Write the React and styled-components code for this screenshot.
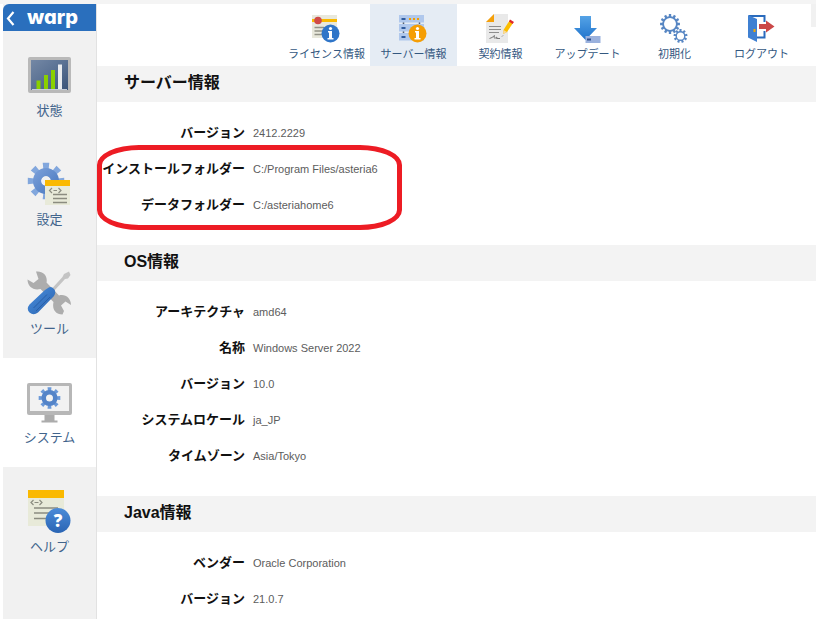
import styled, { createGlobalStyle } from "styled-components";

const GlobalStyle = createGlobalStyle`
  *,
  *::after {
    box-sizing: border-box;
  }
  body {
    margin: 0;
    background: #fff;
    font-family: "Liberation Sans", "Noto Sans CJK JP", sans-serif;
  }
`;

const Page = styled.div`
  display: flex;
  min-height: 100vh;
  padding-left: 3px;
  border-top: 4px solid #f4f4f4;
`;
const Sidebar = styled.nav`
  flex: none;
  display: flex;
  flex-direction: column;
  width: 94px;
  background: #f1f1f1;
  border-right: 1px solid #e2e2e2;
`;
const Brand = styled.a`
  display: flex;
  align-items: center;
  gap: 12px;
  height: 27px;
  padding-left: 3px;
  border-radius: 6px 0 0 0;
  background: #2a6fbd;
  color: #fff;
  font-family: Inter, sans-serif;
  font-size: 20px;
  font-weight: 800;
  font-feature-settings: "cv11";
  line-height: 24px;
  text-decoration: none;

  span {
    padding-bottom: 2px;
  }
`;
const SideLink = styled.a`
  display: flex;
  flex-direction: column;
  align-items: center;
  gap: 4px;
  height: 109px;
  padding-top: 22px;
  background: ${(props) => (props.$active ? "#fff" : "transparent")};
  color: #41648c;
  font-size: 13px;
  line-height: 20px;
  text-decoration: none;
`;
const Main = styled.main`
  flex: 1;
  min-width: 0;
`;
const Toolbar = styled.header`
  display: flex;
  justify-content: flex-end;
  height: 62px;
`;
const ToolLink = styled.a`
  display: flex;
  flex-direction: column;
  align-items: center;
  gap: 2px;
  width: 87px;
  padding-top: 10px;
  background: ${(props) => (props.$active ? "#e5ecf4" : "transparent")};
  color: #34587f;
  font-size: 11px;
  line-height: 16px;
  white-space: nowrap;
  text-decoration: none;
`;
const EdgeHandle = styled.div`
  width: 5px;
  height: 23px;
  margin-left: 6px;
  background: #f1f1f1;
`;
const SectionTitle = styled.h2`
  margin: 0;
  padding: 0 27px 2px;
  background: #f3f3f3;
  color: #111;
  font-size: 16px;
  line-height: 34px;
`;
const Details = styled.dl`
  margin: 0;
  padding: 13px 0 22px;

  section:last-child > & {
    padding-bottom: 0;
  }
`;
const Row = styled.div`
  display: grid;
  grid-template-columns: 148px 1fr;
  column-gap: 8px;
  line-height: 36px;
`;
const Label = styled.dt`
  color: #111;
  font-size: 13px;
  font-weight: 700;
  text-align: right;
  white-space: nowrap;
`;
const Value = styled.dd`
  margin: 0;
  color: #5c5c5c;
  font-size: 11px;
`;
const Group = styled.div`
  position: relative;

  &::after {
    content: "";
    position: absolute;
    top: -6px;
    left: 0;
    width: 305px;
    height: 85px;
    border: 5px solid #ed1c24;
    border-radius: 42px / 20px;
    pointer-events: none;
  }
`;

function gearPath(cx, cy, outer, inner, teeth) {
  const step = (Math.PI * 2) / teeth;
  const points = [];
  for (let i = 0; i < teeth; i++) {
    const a = i * step - Math.PI / 2;
    [
      [inner, -0.28],
      [outer, -0.23],
      [outer, 0.23],
      [inner, 0.28],
    ].forEach(([r, t]) => {
      const x = cx + r * Math.cos(a + t * step);
      const y = cy + r * Math.sin(a + t * step);
      points.push(`${x.toFixed(2)} ${y.toFixed(2)}`);
    });
  }
  return `M${points.join("L")}Z`;
}

function holePath(cx, cy, r) {
  return `M${cx - r} ${cy}a${r} ${r} 0 1 0 ${r * 2} 0a${r} ${r} 0 1 0 ${-r * 2} 0Z`;
}

function SideIcon({ children }) {
  return (
    <svg width="45" height="44" viewBox="0 0 45 44" aria-hidden="true">
      {children}
    </svg>
  );
}

function ToolIcon({ children }) {
  return (
    <svg width="29" height="30" viewBox="0 0 29 30" aria-hidden="true">
      {children}
    </svg>
  );
}

function StatusIcon() {
  return (
    <SideIcon>
      <defs>
        <linearGradient id="screen" x1="0" y1="0" x2="1" y2="1">
          <stop offset="0" stopColor="#7488a5" />
          <stop offset="0.5" stopColor="#5a7193" />
          <stop offset="1" stopColor="#3a5378" />
        </linearGradient>
      </defs>
      <rect x="1" y="4" width="43" height="36" rx="2" fill="#b9b9b9" />
      <rect x="4" y="7" width="37" height="30" fill="url(#screen)" />
      <path d="M5 36.500H40" stroke="#c6ccd6" />
      <path
        d="M11.500 36V27.500M19 36V22M26 36V17"
        stroke="#8ad000"
        strokeWidth="4"
      />
      <path d="M33 36V11.500" stroke="#e9ebee" strokeWidth="4" />
    </SideIcon>
  );
}

function SettingsIcon() {
  return (
    <SideIcon>
      <defs>
        <linearGradient id="cog" x1="0" y1="0" x2="1" y2="1">
          <stop offset="0" stopColor="#7ea2db" />
          <stop offset="1" stopColor="#4576bd" />
        </linearGradient>
      </defs>
      <path
        fillRule="evenodd"
        d={gearPath(19, 19, 18.5, 12, 8) + holePath(19, 19, 5)}
        fill="#82a7dd"
      />
      <path
        fillRule="evenodd"
        d={holePath(19, 19, 13) + holePath(19, 19, 5)}
        fill="url(#cog)"
      />
      <rect x="18" y="19" width="25" height="24" fill="#e8ead9" />
      <rect x="18" y="18" width="25" height="6" fill="#fab900" />
      <path
        d="M25 26l-2.500 2.500L25 31M31.500 26l2.500 2.500L31.500 31M26.500 28.500h3.500"
        fill="none"
        stroke="#8b8c80"
        strokeWidth="1.200"
      />
      <path
        d="M26 32.500H40M26 36.500H40M26 40.500H40"
        stroke="#8b8c80"
        strokeWidth="1.500"
      />
    </SideIcon>
  );
}

function ToolsIcon() {
  return (
    <SideIcon>
      <defs>
        <linearGradient id="handle" x1="0" y1="0" x2="1" y2="1">
          <stop offset="0" stopColor="#4a90e0" />
          <stop offset="1" stopColor="#2a62ad" />
        </linearGradient>
      </defs>
      <path
        d="M9 0.500C16 -0.500 21 5 19.500 11.500L32 24.500C38 22.500 44 27 44 34L38.500 30.500L34 34.500L37 40L35.500 43.500C28 43.500 25 38 26.500 31L13.500 18C6.500 20 0.500 15.500 0.500 8.500L6.500 12L11.500 8Z"
        fill="#adadad"
      />
      <path
        d="M42 0.500L43.500 4L41 7.500L38 8L27 20L25 17.500L35.500 6L37 3Z"
        fill="#c4c4c4"
      />
      <path
        d="M21 17Q24 14.500 27 18Q29.500 21 27 25L11 41.500Q6.500 45 2.500 41.500Q-1 38 2.500 33.500L18 19Z"
        fill="url(#handle)"
      />
      <path d="M6.500 37L20 23.500M9 40L23 26" stroke="#285fa8" />
    </SideIcon>
  );
}

function SystemIcon() {
  return (
    <SideIcon>
      <rect x="0" y="3" width="45" height="32" rx="2" fill="#b7b7b7" />
      <rect x="3" y="6" width="39" height="25" fill="#f2f2f2" />
      <path d="M17.500 35h10v5.500h3v2h-16v-2h3Z" fill="#acacac" />
      <path
        fillRule="evenodd"
        d={gearPath(22.5, 18, 11, 7.5, 8) + holePath(22.5, 18, 4)}
        fill="#6b99d8"
      />
      <path
        fillRule="evenodd"
        d={holePath(22.5, 18, 8) + holePath(22.5, 18, 3.5)}
        fill="#5484c8"
      />
    </SideIcon>
  );
}

function HelpIcon() {
  return (
    <SideIcon>
      <defs>
        <linearGradient id="ball" x1="0" y1="0" x2="0" y2="1">
          <stop offset="0" stopColor="#4b8bd8" />
          <stop offset="1" stopColor="#2a65b4" />
        </linearGradient>
      </defs>
      <rect x="1" y="1" width="36" height="36" fill="#e8ead9" />
      <rect x="1" y="1" width="36" height="8" fill="#fab900" />
      <path
        d="M6.500 11L4 13.500L6.500 16M12.500 11L15 13.500L12.500 16M7.500 13.500h4"
        fill="none"
        stroke="#8b8c80"
        strokeWidth="1.200"
      />
      <path
        d="M7 19H31M7 24H31M7 29.500H31"
        stroke="#8b8c80"
        strokeWidth="1.500"
      />
      <circle cx="31" cy="31.500" r="12.500" fill="url(#ball)" />
      <text
        x="31"
        y="37.500"
        textAnchor="middle"
        fill="#fff"
        fontSize="17"
        fontWeight="800"
        fontFamily="Open Sans"
      >
        ?
      </text>
    </SideIcon>
  );
}

function InfoBadge({ color }) {
  return (
    <g>
      <circle cx="18.500" cy="19.500" r="9" fill={color} />
      <path
        d="M16 17h4v7h1.500v1.500h-6V24H17v-5.500h-1Z"
        fill="#fff"
      />
      <circle cx="18.500" cy="14.500" r="1.600" fill="#fff" />
    </g>
  );
}

function LicenseIcon() {
  return (
    <ToolIcon>
      <rect x="0" y="1" width="25" height="23" fill="#e8e8dc" />
      <rect x="0" y="5" width="25" height="3" fill="#fab900" />
      <path
        d="M2.500 13.500H12M2.500 17H12M2.500 20.500H12"
        stroke="#929287"
        strokeWidth="1.300"
      />
      <circle cx="6" cy="6.500" r="3.800" fill="#d04b49" />
      <InfoBadge color="#2f75c8" />
    </ToolIcon>
  );
}

function ServerIcon() {
  return (
    <ToolIcon>
      <path d="M4.500 7V25M20.500 7V25" stroke="#555f70" strokeWidth="1.500" />
      {[1, 10, 19].map((y) => (
        <g key={y}>
          <rect x="0" y={y} width="25" height="7.500" fill="#b0c8ec" />
          <rect x="2.500" y={y + 3} width="4" height="2" fill="#315c9d" />
        </g>
      ))}
      <path
        d="M10 5H12M14 5H16M18 5H20"
        stroke="#f5a000"
        strokeWidth="2"
      />
      <InfoBadge color="#f59e05" />
    </ToolIcon>
  );
}

function ContractIcon() {
  return (
    <ToolIcon>
      <path d="M8 0H22V29H0V8Z" fill="#e9e9e9" />
      <path d="M8 0V8H0Z" fill="#f5a00a" />
      <path
        d="M3 12.500H15M3 15.500H15M3 18.500H13"
        stroke="#8d8d8d"
        strokeWidth="1.200"
      />
      <path
        d="M3.500 24.500Q6 24 8.500 21.500Q7 26 11 23L10.500 24.500H14M16 22.500l1-1"
        fill="none"
        stroke="#777"
      />
      <path d="M17 20L17.500 16L23.500 6.500L27 9L21 18Z" fill="#fcbd00" />
      <path d="M23 7.500L24 5.500L28 8L26.500 10Z" fill="#e0262c" />
      <path d="M17.500 16L21 18L17 20Z" fill="#f6d9a0" />
    </ToolIcon>
  );
}

function UpdateIcon() {
  return (
    <ToolIcon>
      <defs>
        <linearGradient id="arrow" x1="0" y1="0" x2="0" y2="1">
          <stop offset="0" stopColor="#55a3e6" />
          <stop offset="1" stopColor="#1f73cc" />
        </linearGradient>
      </defs>
      <path d="M7 2H18V14H24L12.500 26L1 14H7Z" fill="url(#arrow)" />
      <rect x="12.500" y="22" width="15" height="7" fill="#9ab1dd" />
      <rect x="14" y="24.500" width="4" height="2" fill="#2d4f8e" />
    </ToolIcon>
  );
}

function ResetIcon() {
  return (
    <ToolIcon>
      <path
        fillRule="evenodd"
        d={gearPath(10, 10, 10, 7.8, 12) + holePath(10, 10, 6)}
        fill="#5786c3"
      />
      <path
        fillRule="evenodd"
        d={gearPath(20.5, 22, 7, 5, 9) + holePath(20.5, 22, 3.6)}
        fill="#5786c3"
      />
    </ToolIcon>
  );
}

function LogoutIcon() {
  return (
    <ToolIcon>
      <path
        d="M2 2H17.500V8M17.500 17V23.500H10"
        fill="none"
        stroke="#2a6bbd"
        strokeWidth="2"
      />
      <path d="M1 1L10 5V28L1 23.500Z" fill="#3f80d2" />
      <rect x="6.500" y="15" width="2" height="3" fill="#f7a800" />
      <path d="M12 10H19V6.500L27.500 12.500L19 18.500V15H12Z" fill="#cb4848" />
    </ToolIcon>
  );
}

const sideLinks = [
  { name: "状態", Icon: StatusIcon },
  { name: "設定", Icon: SettingsIcon },
  { name: "ツール", Icon: ToolsIcon },
  { name: "システム", Icon: SystemIcon, active: true },
  { name: "ヘルプ", Icon: HelpIcon },
];

const toolLinks = [
  { name: "ライセンス情報", Icon: LicenseIcon },
  { name: "サーバー情報", Icon: ServerIcon, active: true },
  { name: "契約情報", Icon: ContractIcon },
  { name: "アップデート", Icon: UpdateIcon },
  { name: "初期化", Icon: ResetIcon },
  { name: "ログアウト", Icon: LogoutIcon },
];

function Item({ label, value }) {
  return (
    <Row>
      <Label>{label}</Label>
      <Value>{value}</Value>
    </Row>
  );
}

function App() {
  return (
    <>
      <GlobalStyle />
      <Page>
        <Sidebar>
          <Brand href="#">
            <svg width="9" height="16" viewBox="0 0 9 16" aria-hidden="true">
              <path
                d="M7.500 2L2 8.500L7.500 15"
                fill="none"
                stroke="#fff"
                strokeWidth="2.200"
              />
            </svg>
            <span>warp</span>
          </Brand>
          {sideLinks.map(({ name, Icon, active }) => (
            <SideLink key={name} href="#" $active={active}>
              <Icon />
              {name}
            </SideLink>
          ))}
        </Sidebar>
        <Main>
          <Toolbar>
            {toolLinks.map(({ name, Icon, active }) => (
              <ToolLink key={name} href="#" $active={active}>
                <Icon />
                {name}
              </ToolLink>
            ))}
            <EdgeHandle />
          </Toolbar>
          <section>
            <SectionTitle>サーバー情報</SectionTitle>
            <Details>
              <Item label="バージョン" value="2412.2229" />
              <Group>
                <Item
                  label="インストールフォルダー"
                  value="C:/Program Files/asteria6"
                />
                <Item label="データフォルダー" value="C:/asteriahome6" />
              </Group>
            </Details>
          </section>
          <section>
            <SectionTitle>OS情報</SectionTitle>
            <Details>
              <Item label="アーキテクチャ" value="amd64" />
              <Item label="名称" value="Windows Server 2022" />
              <Item label="バージョン" value="10.0" />
              <Item label="システムロケール" value="ja_JP" />
              <Item label="タイムゾーン" value="Asia/Tokyo" />
            </Details>
          </section>
          <section>
            <SectionTitle>Java情報</SectionTitle>
            <Details>
              <Item label="ベンダー" value="Oracle Corporation" />
              <Item label="バージョン" value="21.0.7" />
            </Details>
          </section>
        </Main>
      </Page>
    </>
  );
}

export default App;
